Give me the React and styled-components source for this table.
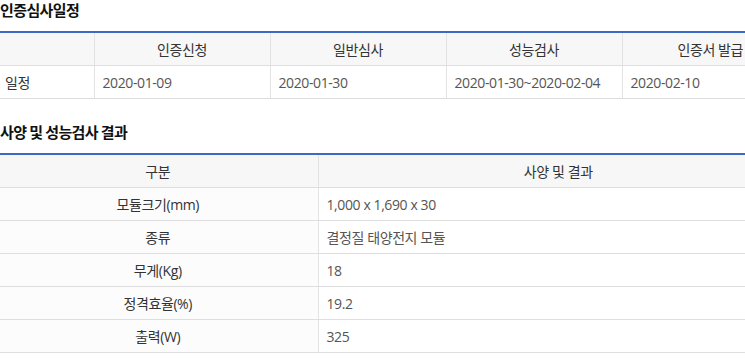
import React from 'react';
import styled, { createGlobalStyle } from 'styled-components';

const GlobalStyle = createGlobalStyle`
  html, body {
    margin: 0;
    padding: 0;
    background: #fff;
    overflow: hidden;
  }
  body {
    font-family: "Open Sans", "Noto Sans CJK KR", sans-serif;
  }
`;

const Page = styled.div`
  width: 800px;
  margin-left: -2px;
`;

const Section = styled.section`
  & + & {
    margin-top: 23px;
  }
`;

const SectionTitle = styled.h3`
  margin: 0 0 11px 2px;
  font-family: "Noto Sans CJK KR", sans-serif;
  font-size: 15px;
  line-height: 20px;
  font-weight: 700;
  color: #111;
  letter-spacing: -0.6px;
`;

const Table = styled.table`
  width: 100%;
  border-collapse: collapse;
  table-layout: fixed;
  border-top: 2px solid #3b69c6;
  font-size: 14px;
  letter-spacing: -0.4px;
`;

const Col = styled.col`
  width: ${({ $w }) => $w};
`;

const HeadCell = styled.th`
  height: 32px;
  padding: 0 8px;
  background: #f7f7f7;
  color: #333;
  font-weight: 400;
  text-align: center;
  border-bottom: 1px solid #dedede;
  border-left: 1px solid #e3e3e3;
  &:first-child {
    border-left: none;
  }
`;

const LabelCell = styled.th`
  height: 32px;
  padding: 0 8px 0 ${({ $left }) => ($left ? '7px' : '8px')};
  background: ${({ $left }) => ($left ? '#fff' : '#fcfcfc')};
  color: #333;
  font-weight: 400;
  text-align: ${({ $left }) => ($left ? 'left' : 'center')};
  border-bottom: 1px solid #dedede;
`;

const Cell = styled.td`
  height: 32px;
  padding: 0 8px;
  color: #555;
  text-align: left;
  border-bottom: 1px solid #dedede;
  border-left: 1px solid #e3e3e3;
`;

const schedule = [
  { title: '인증신청', date: '2020-01-09' },
  { title: '일반심사', date: '2020-01-30' },
  { title: '성능검사', date: '2020-01-30~2020-02-04' },
  { title: '인증서 발급', date: '2020-02-10' },
];

const specs = [
  ['모듈크기(mm)', '1,000 x 1,690 x 30'],
  ['종류', '결정질 태양전지 모듈'],
  ['무게(Kg)', '18'],
  ['정격효율(%)', '19.2'],
  ['출력(W)', '325'],
];

const App = () => (
  <>
    <GlobalStyle />
    <Page>
      <Section>
        <SectionTitle>인증심사일정</SectionTitle>
        <Table>
          <colgroup>
            <Col $w="12%" />
            {schedule.map((s) => (
              <Col key={s.title} $w="22%" />
            ))}
          </colgroup>
          <thead>
            <tr>
              <HeadCell />
              {schedule.map((s) => (
                <HeadCell key={s.title}>{s.title}</HeadCell>
              ))}
            </tr>
          </thead>
          <tbody>
            <tr>
              <LabelCell $left>일정</LabelCell>
              {schedule.map((s) => (
                <Cell key={s.title}>{s.date}</Cell>
              ))}
            </tr>
          </tbody>
        </Table>
      </Section>

      <Section>
        <SectionTitle>사양 및 성능검사 결과</SectionTitle>
        <Table>
          <colgroup>
            <Col $w="40%" />
            <Col $w="60%" />
          </colgroup>
          <thead>
            <tr>
              <HeadCell>구분</HeadCell>
              <HeadCell>사양 및 결과</HeadCell>
            </tr>
          </thead>
          <tbody>
            {specs.map(([label, value]) => (
              <tr key={label}>
                <LabelCell>{label}</LabelCell>
                <Cell>{value}</Cell>
              </tr>
            ))}
          </tbody>
        </Table>
      </Section>
    </Page>
  </>
);

export default App;
